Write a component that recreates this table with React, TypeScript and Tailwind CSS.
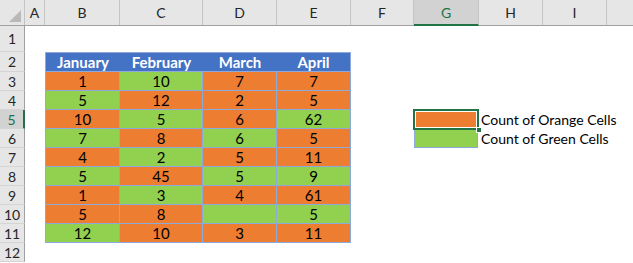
import React from "react";

const colW = [
  "w-[25px]",
  "w-[20px]",
  "w-[75px]",
  "w-[83px]",
  "w-[74px]",
  "w-[74px]",
  "w-[63px]",
  "w-[65px]",
  "w-[64px]",
  "w-[64px]",
];

const letters = ["A", "B", "C", "D", "E", "F", "G", "H", "I"];

type Fill = "o" | "g";
const data: [string, Fill][][] = [
  [["1", "o"], ["10", "g"], ["7", "o"], ["7", "o"]],
  [["5", "g"], ["12", "o"], ["2", "o"], ["5", "o"]],
  [["10", "o"], ["5", "g"], ["6", "o"], ["62", "g"]],
  [["7", "g"], ["8", "o"], ["6", "g"], ["5", "o"]],
  [["4", "o"], ["2", "g"], ["5", "o"], ["11", "o"]],
  [["5", "g"], ["45", "o"], ["5", "g"], ["9", "g"]],
  [["1", "o"], ["3", "g"], ["4", "o"], ["61", "o"]],
  [["5", "o"], ["8", "o"], ["", "g"], ["5", "g"]],
  [["12", "g"], ["10", "o"], ["3", "o"], ["11", "o"]],
];

const months = ["January", "February", "March", "April"];

function RowHead({ n, selected }: { n: number; selected?: boolean }) {
  return (
    <div
      className={
        "w-[25px] shrink-0 flex items-center justify-center text-[14px] border-b border-[#d4d4d4] " +
        (selected
          ? "bg-[#d2d2d2] text-[#217346] border-r-2 border-r-[#217346]"
          : "bg-[#e6e6e6] text-[#262626] border-r border-r-[#a0a0a0]")
      }
    >
      {n}
    </div>
  );
}

function Blank({ w }: { w: string }) {
  return <div className={w + " shrink-0"} />;
}

export default function App() {
  return (
    <div
      className="w-[633px] h-[263px] overflow-hidden bg-white flex flex-col"
      style={{ fontFamily: "Lato, 'Open Sans', 'Liberation Sans', sans-serif" }}
    >
      {/* column letters */}
      <div className="h-[26px] flex shrink-0 bg-[#e6e6e6] border-b border-[#a0a0a0]">
        <div className="w-[25px] shrink-0 border-r border-[#c4c4c4] flex items-end justify-end pr-[3px] pb-[3px]">
          <svg width="12" height="12" viewBox="0 0 12 12">
            <polygon points="12,0 12,12 0,12" fill="#b9b9b9" />
          </svg>
        </div>
        {letters.map((l, i) =>
          l === "G" ? (
            <div
              key={l}
              className={
                colW[i + 1] +
                " shrink-0 flex items-center justify-center text-[14px] bg-[#d2d2d2] text-[#217346] border-r border-[#c4c4c4] border-b-2 border-b-[#217346] -mb-px"
              }
            >
              {l}
            </div>
          ) : (
            <div
              key={l}
              className={
                colW[i + 1] +
                " shrink-0 flex items-center justify-center text-[14px] text-[#262626] border-r border-[#c4c4c4]"
              }
            >
              {l}
            </div>
          )
        )}
        <div className="flex-1" />
      </div>

      {/* row 1 */}
      <div className="h-[26px] flex shrink-0">
        <RowHead n={1} />
      </div>

      {/* row 2: month headings */}
      <div className="h-[20px] flex shrink-0">
        <RowHead n={2} />
        <Blank w="w-[20px]" />
        {months.map((m, i) => (
          <div
            key={m}
            className={
              colW[i + 2] +
              " shrink-0 bg-[#4472c4] text-white font-bold text-[15px] flex items-center justify-center border-t border-b border-[#8ea9db] " +
              (i === 0 ? "border-l " : "") +
              (i === 3 ? "border-r" : "")
            }
          >
            {m}
          </div>
        ))}
      </div>

      {/* rows 3-11 */}
      {data.map((row, r) => {
        const n = r + 3;
        return (
          <div key={n} className="h-[19px] flex shrink-0">
            <RowHead n={n} selected={n === 5} />
            <Blank w="w-[20px]" />
            {row.map(([v, f], c) => (
              <div
                key={c}
                className={
                  colW[c + 2] +
                  " shrink-0 flex items-center justify-center pt-px text-[15px] text-black border-r border-b border-[#8ea9db] " +
                  (c === 0 ? "border-l " : "") +
                  (f === "o" ? "bg-[#ed7d31]" : "bg-[#92d050]")
                }
              >
                {v}
              </div>
            ))}
            <Blank w="w-[63px]" />
            {n === 5 && (
              <>
                <div className="w-[65px] shrink-0 relative">
                  <div className="absolute top-[-1px] left-[-1px] right-0 bottom-[-1px] border-2 border-[#217346]">
                    <div className="w-full h-full border border-white bg-[#ed7d31]" />
                  </div>
                  <div className="absolute right-[-3px] bottom-[-4px] w-[6px] h-[6px] bg-[#217346] border border-white" />
                </div>
                <div className="w-[64px] shrink-0 whitespace-nowrap text-[14px] text-black flex items-center pl-[2px]">
                  Count of Orange Cells
                </div>
              </>
            )}
            {n === 6 && (
              <>
                <div className="w-[65px] shrink-0 pr-px">
                  <div className="w-full h-full bg-[#92d050] border border-[#8ea9db]" />
                </div>
                <div className="w-[64px] shrink-0 whitespace-nowrap text-[14px] text-black flex items-center pl-[2px]">
                  Count of Green Cells
                </div>
              </>
            )}
          </div>
        );
      })}

      {/* row 12 */}
      <div className="h-[19px] flex shrink-0">
        <RowHead n={12} />
      </div>
    </div>
  );
}
